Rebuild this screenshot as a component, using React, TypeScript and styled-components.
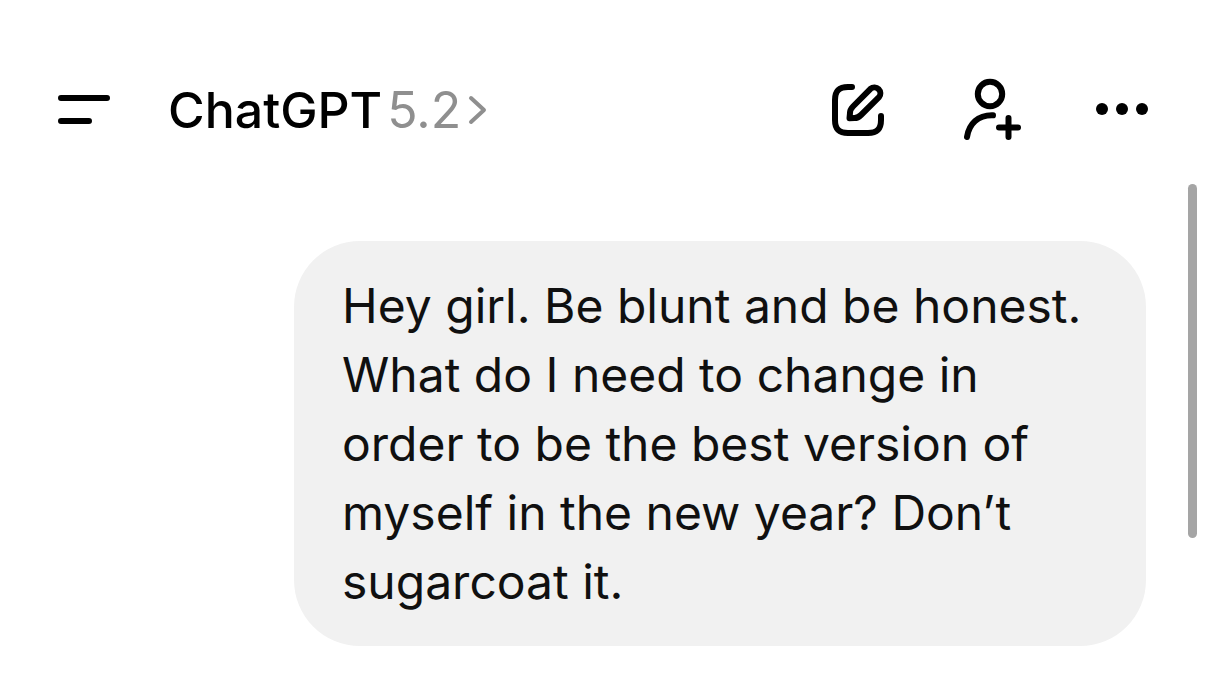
import React from 'react';
import styled, { createGlobalStyle } from 'styled-components';

const GlobalStyle = createGlobalStyle`
  body {
    margin: 0;
    background: #ffffff;
    color: #000000;
    font-family: Inter, "Liberation Sans", sans-serif;
  }
`;

const Page = styled.div`
  position: relative;
  padding-bottom: 40px;
`;

const Header = styled.header`
  display: flex;
  align-items: center;
  justify-content: space-between;
  padding: 76px 56px 0 58px;
`;

const Group = styled.div<{ $gap: number }>`
  display: flex;
  align-items: center;
  gap: ${({ $gap }) => $gap}px;
`;

const PlainButton = styled.button`
  display: flex;
  align-items: center;
  padding: 0;
  border: 0;
  background: none;
  color: inherit;
  font: inherit;
  cursor: pointer;
`;

const ModelButton = styled(PlainButton)`
  gap: 5px;
  font-size: 50px;
  line-height: 68px;
  white-space: nowrap;
`;

const AppName = styled.span`
  font-weight: 500;
`;

const Version = styled.span`
  display: flex;
  align-items: center;
  gap: 7px;
  color: #8f8f8f;
`;

const Icon = styled.svg<{ $stroke?: number }>`
  display: block;
  flex: none;
  fill: none;
  stroke: currentColor;
  stroke-width: ${({ $stroke = 6 }) => $stroke};
  stroke-linecap: round;
  stroke-linejoin: round;
`;

const Conversation = styled.main`
  display: flex;
  justify-content: flex-end;
  padding: 97px 60px 0;
`;

const Bubble = styled.p`
  box-sizing: border-box;
  max-width: 852px;
  margin: 0;
  padding: 30px 48px;
  border-radius: 66px;
  background: #f1f1f1;
  color: #101010;
  font-size: 48px;
  line-height: 69px;
`;

const ScrollThumb = styled.div`
  position: absolute;
  top: 184px;
  right: 9px;
  width: 9px;
  height: 354px;
  border-radius: 5px;
  background: #a5a5a5;
`;

export default function App() {
  return (
    <Page>
      <GlobalStyle />
      <Header>
        <Group $gap={58}>
          <PlainButton type="button" aria-label="Open menu">
            <Icon width="52" height="32" viewBox="0 0 52 32">
              <path d="M3 4H49M3 27H31" />
            </Icon>
          </PlainButton>
          <ModelButton type="button">
            <AppName>ChatGPT</AppName>
            <Version>
              5.2
              <Icon $stroke={4} width="20" height="30" viewBox="0 0 20 30">
                <path d="M3 3L16 15L3 27" />
              </Icon>
            </Version>
          </ModelButton>
        </Group>
        <Group $gap={72}>
          <PlainButton type="button" aria-label="New chat">
            <Icon width="56" height="56" viewBox="0 0 56 56">
              <path d="M22 5H18C9 5 5 9 5 18V38C5 47 9 51 18 51H38C47 51 51 47 51 38V34" />
              <path d="M40.5 6.8A6 6 0 0 1 49 15.2L31 33C29 35 27 36 24.5 36L19.5 36.2L20 31C20 29 21 26.5 23 24.5Z" />
            </Icon>
          </PlainButton>
          <PlainButton type="button" aria-label="Add people">
            <Icon width="66" height="68" viewBox="-2 0 66 68">
              <circle cx="30" cy="18" r="12.2" />
              <path d="M7 61C9 48 18 38.8 33 39.3" />
              <path d="M39 51.4H58M48.5 42V61" />
            </Icon>
          </PlainButton>
          <PlainButton type="button" aria-label="More options">
            <Icon width="54" height="14" viewBox="0 0 54 14">
              <g fill="currentColor" stroke="none">
                <circle cx="6" cy="6" r="6" />
                <circle cx="26" cy="6" r="6" />
                <circle cx="46" cy="6" r="6" />
              </g>
            </Icon>
          </PlainButton>
        </Group>
      </Header>
      <Conversation>
        <Bubble>
          Hey girl. Be blunt and be honest. What do I need to change in order to
          be the best version of myself in the new year? Don’t sugarcoat it.
        </Bubble>
      </Conversation>
      <ScrollThumb />
    </Page>
  );
}
